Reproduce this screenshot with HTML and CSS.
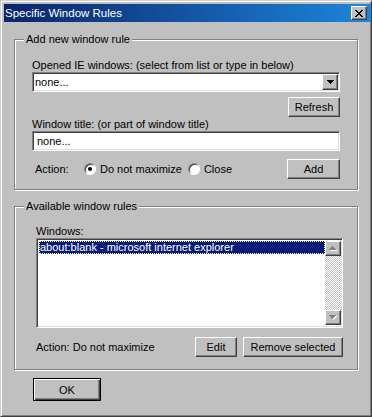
FILE: index.html
```html
<!DOCTYPE html>
<html lang="en">
<head>
	<meta charset="UTF-8">
	<title>Specific Window Rules</title>
	<link rel="stylesheet" href="styles.css">
</head>
<body>
	<div class="window">
		<div class="titlebar">
			<span class="title">Specific Window Rules</span>
			<span class="close-btn">
				<svg width="8" height="7" viewBox="0 0 8 7" shape-rendering="crispEdges"><path d="M0 0h2v1H0zM6 0h2v1H6zM1 1h2v1H1zM5 1h2v1H5zM2 2h4v1H2zM3 3h2v1H3zM2 4h4v1H2zM1 5h2v1H1zM5 5h2v1H5zM0 6h2v1H0zM6 6h2v1H6z"/></svg>
			</span>
		</div>

		<div class="content">
			<div class="group group-add">
				<span class="group-title">Add new window rule</span>

				<div class="label label-first">Opened IE windows: (select from list or type in below)</div>
				<div class="combo sunken">
					<span class="combo-text">none...</span>
					<span class="combo-btn raised">
						<svg width="7" height="4" viewBox="0 0 7 4" shape-rendering="crispEdges"><path d="M0 0h7v1H0zM1 1h5v1H1zM2 2h3v1H2zM3 3h1v1H3z"/></svg>
					</span>
				</div>
				<div class="btn-row">
					<span class="btn btn-refresh">Refresh</span>
				</div>

				<div class="label">Window title: (or part of window title)</div>
				<div class="field sunken">none...</div>

				<div class="action-row">
					<span class="action-label">Action:</span>
					<span class="radio checked"></span>
					<span class="radio-text">Do not maximize</span>
					<span class="radio radio-second"></span>
					<span class="radio-text">Close</span>
					<span class="btn btn-add">Add</span>
				</div>
			</div>

			<div class="group group-rules">
				<span class="group-title">Available window rules</span>

				<div class="label label-first">Windows:</div>
				<div class="listbox sunken">
					<div class="list-items">
						<div class="list-item selected">about:blank - microsoft internet explorer</div>
					</div>
					<div class="scrollbar">
						<span class="scroll-btn raised">
							<svg width="8" height="5" viewBox="0 0 8 5" shape-rendering="crispEdges"><path fill="#fff" d="M4 1h1v1H4zM3 2h3v1H3zM2 3h5v1H2zM1 4h7v1H1z"/><path fill="#808080" d="M3 0h1v1H3zM2 1h3v1H2zM1 2h5v1H1zM0 3h7v1H0z"/></svg>
						</span>
						<span class="scroll-track"></span>
						<span class="scroll-btn raised">
							<svg width="8" height="5" viewBox="0 0 8 5" shape-rendering="crispEdges"><path fill="#fff" d="M1 1h7v1H1zM2 2h5v1H2zM3 3h3v1H3zM4 4h1v1H4z"/><path fill="#808080" d="M0 0h7v1H0zM1 1h5v1H1zM2 2h3v1H2zM3 3h1v1H3z"/></svg>
						</span>
					</div>
				</div>

				<div class="rules-row">
					<span class="rule-action">Action: Do not maximize</span>
					<span class="btn btn-edit">Edit</span>
					<span class="btn btn-remove">Remove selected</span>
				</div>
			</div>

			<div class="footer">
				<span class="btn btn-ok">OK</span>
			</div>
		</div>
	</div>
</body>
</html>
```

FILE: styles.css
```css
html, body {
	margin: 0;
	overflow: hidden;
}

body {
	font-family: "Liberation Sans", Arial, sans-serif;
	font-size: 11px;
	line-height: 14px;
	color: #000;
	background: #c0c0c0;
}

.window {
	width: 372px;
	height: 417px;
	box-sizing: border-box;
	background: #c0c0c0;
	border: 1px solid;
	border-color: #d4d0c8 #404040 #404040 #d4d0c8;
	box-shadow: inset 1px 1px #fff, inset -1px -1px #808080;
	padding: 3px 0 0 3px;
}

.titlebar {
	height: 18px;
	display: flex;
	align-items: center;
	justify-content: space-between;
	padding: 0 4px 0 1px;
	background: linear-gradient(to right, #0a246a, #1c86dc);
	color: #fff;
	font-size: 11.5px;
}

.close-btn {
	width: 16px;
	height: 14px;
	box-sizing: border-box;
	display: flex;
	align-items: center;
	justify-content: center;
	background: #c0c0c0;
	border: 1px solid;
	border-color: #fff #404040 #404040 #fff;
	box-shadow: inset -1px -1px #808080;
}

.content {
	padding: 0 13px 0 10px;
}

/* group boxes */
.group {
	border: 1px solid #808080;
	box-shadow: inset 1px 1px #fff, 1px 1px #fff;
	padding: 0 17px 10px 17px;
}

.group-add {
	margin-top: 17px;
}

.group-rules {
	margin-top: 16px;
	padding: 0 14px 12px 21px;
}

.group-title {
	display: table;
	margin: -8px 0 0 -8px;
	padding: 0 2px;
	background: #c0c0c0;
}

.group-rules .group-title {
	margin-left: -12px;
}

.label-first {
	margin-top: 12px;
}

.group-rules .label-first {
	margin-top: 11px;
}

/* 3d borders */
.sunken {
	box-sizing: border-box;
	border: 1px solid;
	border-color: #808080 #fff #fff #808080;
	box-shadow: inset 1px 1px #404040, inset -1px -1px #dfdfdf;
	background: #fff;
}

.raised {
	box-sizing: border-box;
	background: #c0c0c0;
	border: 1px solid;
	border-color: #fff #404040 #404040 #fff;
	box-shadow: inset -1px -1px #808080;
}

.btn {
	box-sizing: border-box;
	display: flex;
	align-items: center;
	justify-content: center;
	height: 20px;
	background: #c0c0c0;
	border: 1px solid;
	border-color: #fff #404040 #404040 #fff;
	box-shadow: inset -1px -1px #808080;
}

/* combo and field */
.combo {
	height: 20px;
	display: flex;
	align-items: center;
	padding: 1px;
}

.combo-text {
	flex: 1;
	padding-left: 1px;
}

.combo-btn {
	width: 16px;
	height: 16px;
	display: flex;
	align-items: center;
	justify-content: center;
}

.btn-row {
	display: flex;
	justify-content: flex-end;
	margin-top: 5px;
}

.btn-refresh {
	width: 52px;
}

.field {
	height: 20px;
	padding: 2px 4px;
}

/* action row */
.action-row {
	display: flex;
	align-items: center;
	height: 20px;
	margin-top: 8px;
}

.action-label {
	width: 49px;
	margin-left: 3px;
}

.radio {
	width: 12px;
	height: 12px;
	box-sizing: border-box;
	border-radius: 50%;
	border: 1px solid;
	border-color: #808080 #fff #fff #808080;
	box-shadow: inset 1px 1px #404040;
	background: #fff;
	display: flex;
	align-items: center;
	justify-content: center;
}

.radio.checked::after {
	content: "";
	width: 4px;
	height: 4px;
	border-radius: 50%;
	background: #000;
}

.radio-text {
	margin-left: 4px;
}

.radio-second {
	margin-left: 6px;
}

.btn-add {
	width: 53px;
	margin-left: auto;
}

/* rules list */
.listbox {
	height: 90px;
	display: flex;
	padding: 2px 1px 2px 2px;
}

.list-items {
	flex: 1;
}

.list-item {
	height: 13px;
	line-height: 13px;
	padding-left: 1px;
	white-space: nowrap;
}

.list-item.selected {
	background: #0a1c7a;
	color: #fff;
	outline: 1px dotted #ffffc0;
	outline-offset: -1px;
}

.scrollbar {
	width: 16px;
	display: flex;
	flex-direction: column;
}

.scroll-btn {
	height: 15px;
	display: flex;
	align-items: center;
	justify-content: center;
}

.scroll-track {
	flex: 1;
	background: repeating-conic-gradient(#fff 0 25%, #c0c0c0 0 50%) 0 0 / 2px 2px;
}

.rules-row {
	display: flex;
	align-items: center;
	margin-top: 9px;
}

.btn-edit {
	width: 42px;
	margin-left: auto;
}

.btn-remove {
	width: 100px;
	margin-left: 6px;
}

.footer {
	margin-top: 8px;
	padding-left: 19px;
}

.btn-ok {
	width: 68px;
	height: 23px;
	border: 1px solid #000;
	box-shadow: inset 1px 1px #fff, inset -1px -1px #404040, inset -2px -2px #808080;
}
```
